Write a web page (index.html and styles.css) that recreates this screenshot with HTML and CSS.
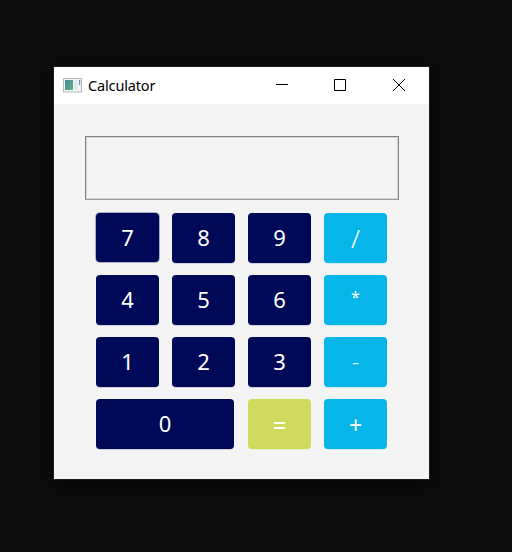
FILE: index.html
```html
<!DOCTYPE html>
<html lang="en">
<head>
<meta charset="utf-8">
<title>Calculator</title>
<link rel="stylesheet" href="styles.css">
</head>
<body>
<main class="window">
  <header class="titlebar">
    <svg class="app-icon" width="20" height="16" viewBox="0 0 20 16">
      <defs>
        <linearGradient id="pane" x1="0" y1="0" x2="1" y2="1"><stop offset="0" stop-color="#4382a0"/><stop offset="1" stop-color="#62b583"/></linearGradient>
        <linearGradient id="strip" x1="0" y1="0" x2="0" y2="1"><stop offset="0" stop-color="#4b83b5"/><stop offset="1" stop-color="#73bd86"/></linearGradient>
      </defs>
      <path fill="#b4b7be" d="M0 1h19v14.500H0z"/>
      <path fill="#f4f5f6" d="M1 2h17v12.500H1z"/>
      <path fill="url(#pane)" d="M2 3h8v10H2z"/>
      <path fill="#e3e9ea" d="M11 3h4v10h-4z"/>
      <path fill="url(#strip)" d="M16 3h1.200v6L16 7.500z"/>
    </svg>
    <h1 class="title">Calculator</h1>
    <div class="controls">
      <svg width="12" height="12" viewBox="0 0 12 12"><path d="M0 5.500h12"/></svg>
      <svg width="12" height="12" viewBox="0 0 12 12"><path d="M.5.5h11v11H.5z"/></svg>
      <svg width="12" height="12" viewBox="0 0 12 12"><path d="M0 0l12 12M12 0L0 12"/></svg>
    </div>
  </header>
  <div class="display"></div>
  <div class="keys">
    <button class="key focused">7</button>
    <button class="key">8</button>
    <button class="key">9</button>
    <button class="key operator divide">/</button>
    <button class="key">4</button>
    <button class="key">5</button>
    <button class="key">6</button>
    <button class="key operator times">*</button>
    <button class="key">1</button>
    <button class="key">2</button>
    <button class="key">3</button>
    <button class="key operator minus">-</button>
    <button class="key zero">0</button>
    <button class="key equals">=</button>
    <button class="key operator plus">+</button>
  </div>
</main>
</body>
</html>
```

FILE: styles.css
```css
* {
  box-sizing: border-box;
}

body {
  margin: 0;
  height: 552px;
  padding: 67px 0 0 54px;
  background: #0c0c0c;
  font-family: "Noto Sans", "Open Sans", sans-serif;
  overflow: hidden;
}

.window {
  width: 375px;
  height: 412px;
  background: #f4f4f4;
  box-shadow: 0 0 0 1px #1b1b1b, 0 3px 12px 1px #070707;
}

.titlebar {
  display: flex;
  align-items: center;
  height: 37px;
  padding: 0 24px 2px 9px;
  background: #fff;
}

.app-icon {
  flex: none;
}

.title {
  margin: 0 0 0 5px;
  font-size: 14.5px;
  font-weight: 400;
  letter-spacing: -0.15px;
  line-height: 20px;
  color: #000;
}

.controls {
  display: flex;
  gap: 46px;
  margin-left: auto;
}

.controls svg {
  fill: none;
  stroke: #000;
  stroke-width: 1;
}

.controls svg:nth-child(2) {
  margin-right: 1px;
}

.display {
  width: 314px;
  height: 64px;
  margin: 32px 0 0 31px;
  border: 1px solid #828282;
  border-bottom-color: #999;
  box-shadow: inset 0 0 0 1px #d4d4d4;
}

.keys {
  display: grid;
  grid-template-columns: repeat(4, 63px);
  grid-auto-rows: 50px;
  gap: 12px 13px;
  margin: 13px 0 0 42px;
}

.key {
  padding: 0 0 2px;
  border: 0;
  border-radius: 4px;
  background: #000957;
  box-shadow: 0 1px 0 -0.4px rgba(0, 9, 87, 0.3);
  font: 22px/48px "Noto Sans", "Open Sans", sans-serif;
  color: #fff;
}

.focused {
  height: 49px;
  padding-bottom: 1px;
  box-shadow: 0 0 0 1px rgba(0, 9, 87, 0.3);
}

.zero {
  grid-column: span 2;
  width: 138px;
}

.operator {
  background: #06b6e8;
  box-shadow: 0 1px 0 -0.4px rgba(6, 182, 232, 0.3);
}

.divide {
  padding-bottom: 0;
  font-size: 26px;
  font-weight: 300;
}

.times {
  padding-bottom: 6px;
  font-size: 16px;
  line-height: 44px;
}

.minus {
  font-weight: 300;
}

.plus {
  padding: 2px 0 0;
  font-size: 23px;
}

.equals {
  padding: 2px 0 0;
  background: #d0da5e;
  box-shadow: 0 1px 0 -0.4px rgba(208, 218, 94, 0.3);
  font-size: 23px;
  font-weight: 500;
}
```
